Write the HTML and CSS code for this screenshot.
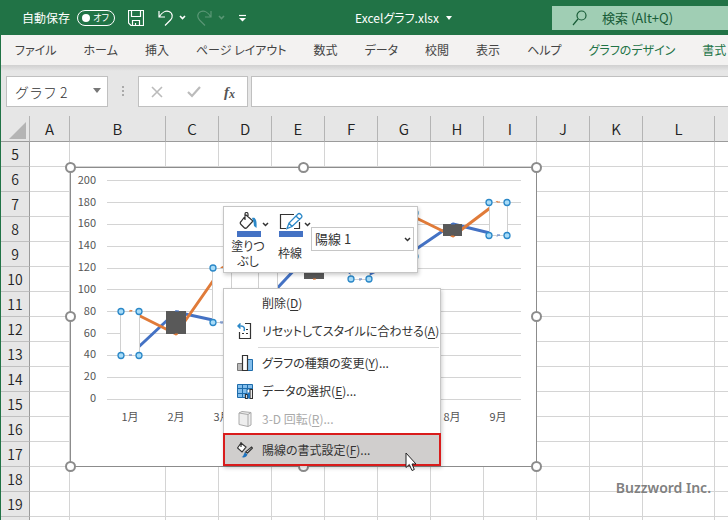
FILE: index.html
```
<!DOCTYPE html>
<html lang="ja">
<head>
<meta charset="utf-8">
<title>Excelグラフ.xlsx</title>
<link rel="stylesheet" href="styles.css">
</head>
<body>
<header class="titlebar">
  <div class="quick">
    <span class="autosave" id="autosave">自動保存</span>
    <button class="toggle" role="switch" aria-checked="false" aria-labelledby="autosave"><i class="knob"></i><span>オフ</span></button>
    <button class="icon save" aria-label="上書き保存"><svg width="16" height="16" viewBox="0 0 16 16"><path d="M.5.5h15v15H3L.5 13zM3.500.5v6h9v-6M4.500 15.500v-5h7v5M7.500 15.500v-2.500"/></svg></button>
    <button class="icon undo" aria-label="元に戻す"><svg width="28" height="18" viewBox="0 0 28 18"><path d="M1 2v6h6M1.500 7.500C4 3 8 1.500 11 2.500c4 1.500 4 6 1.500 8.500L7 16.500"/><path class="thick" d="M22 7l2.500 2.500L27 7"/></svg></button>
    <button class="icon redo" aria-label="やり直し" disabled><svg width="28" height="18" viewBox="0 0 28 18"><path d="M14 2v6H8M13.500 7.500C11 3 7 1.500 4 2.500c-4 1.500-4 6-1.500 8.500L8 16.500"/><path class="thick" d="M22 7l2.500 2.500L27 7"/></svg></button>
    <button class="icon custom" aria-label="クイック アクセスのカスタマイズ"><svg width="8" height="8" viewBox="0 0 8 8"><path d="M0 1.500h7"/><path class="fill" d="M0 4h7L3.500 7.500z"/></svg></button>
  </div>
  <button class="doc">Excelグラフ.xlsx<svg width="6" height="4" viewBox="0 0 6 4"><path d="M0 0h6L3 4z"/></svg></button>
  <label class="search">
    <svg width="16" height="16" viewBox="0 0 16 16"><circle cx="9.500" cy="5.500" r="4.500"/><path d="M6 9L1 15"/></svg>
    <input type="text" placeholder="検索 (Alt+Q)" aria-label="検索">
  </label>
</header>
<nav class="tabs">
  <button>ファイル</button><button>ホーム</button><button>挿入</button><button>ページ レイアウト</button><button>数式</button><button>データ</button><button>校閲</button><button>表示</button><button>ヘルプ</button><button class="ctx">グラフのデザイン</button><button class="ctx">書式</button>
</nav>
<main>
  <div class="formula">
    <div class="namebox"><input type="text" value="グラフ 2" aria-label="名前ボックス"><svg width="8" height="5" viewBox="0 0 8 5"><path d="M0 0h8L4 5z"/></svg></div>
    <i class="grip"></i>
    <div class="fxtools">
      <button aria-label="キャンセル"><svg width="12" height="12" viewBox="0 0 12 12"><path d="M1 1l10 10M11 1L1 11"/></svg></button>
      <button aria-label="入力"><svg width="14" height="12" viewBox="0 0 14 12"><path class="check" d="M1 6l4 4 8-9"/></svg></button>
      <button class="fx" aria-label="関数の挿入">f<sub>x</sub></button>
    </div>
    <input class="fbar" type="text" aria-label="数式バー">
  </div>
  <section class="sheet">
    <table>
      <colgroup><col class="c-head"><col class="c-a"><col class="c-b"><col class="c"><col class="c"><col class="c"><col class="c"><col class="c"><col class="c"><col class="c"><col class="c"><col class="c"><col class="c-l"><col></colgroup>
      <thead><tr><td class="corner"><svg width="18" height="18" viewBox="0 0 18 18"><path d="M17 0v17H0z"/></svg></td><th>A</th><th>B</th><th>C</th><th>D</th><th>E</th><th>F</th><th>G</th><th>H</th><th>I</th><th>J</th><th>K</th><th>L</th><th></th></tr></thead>
      <tbody id="rows"></tbody>
    </table>
    <svg class="chart" width="488" height="320" viewBox="60 157 488 320" role="img" aria-label="グラフ 2">
      <rect class="area" x="70.500" y="167.500" width="466" height="299"/>
      <g class="grid"><path d="M107 180.500H521M107 202.500H521M107 224.500H521M107 246.500H521M107 268.500H521M107 289.500H521M107 311.500H521M107 333.500H521M107 355.500H521M107 377.500H521M107 399.500H521"/></g>
      <g class="values"><text x="96" y="184">200</text><text x="96" y="206">180</text><text x="96" y="227">160</text><text x="96" y="249">140</text><text x="96" y="271">120</text><text x="96" y="293">100</text><text x="96" y="315">80</text><text x="96" y="337">60</text><text x="96" y="358">40</text><text x="96" y="380">20</text><text x="96" y="402">0</text></g>
      <g class="months"><text x="130" y="421">1月</text><text x="176" y="421">2月</text><text x="222" y="421">3月</text><text x="452" y="421">8月</text><text x="498" y="421">9月</text></g>
      <path class="line blue" d="M130 355l46-43 46 10 46-24 46-49 46 30 46-23 47-32 45 11"/>
      <path class="line orange" d="M130 311l46 23 46-66 46-21 46 31 46-34 46-31 47 23 45-34"/>
      <g class="up"><rect x="120.500" y="311.500" width="19" height="44"/><rect x="212.500" y="268.500" width="19" height="54"/><rect x="258.500" y="246.500" width="19" height="54"/><rect x="350.500" y="244.500" width="19" height="35"/><rect x="396.500" y="213.500" width="19" height="43"/><rect x="489.500" y="202.500" width="18" height="33"/></g>
      <g class="down"><rect x="166" y="311" width="20" height="23"/><rect x="304" y="249" width="20" height="30"/><rect x="443" y="224" width="19" height="12"/></g>
      <path class="tick orange" d="M129 311h3M497 202h3M230 268h-6M175 334h3M313 279h3M451 236h3"/>
      <path class="tick blue" d="M129 355h3M497 235h3M359 279h3M220 322h5M175 311h4M451 224h4"/>
      <g class="dots"><circle cx="121" cy="311.500" r="3"/><circle cx="139" cy="311.500" r="3"/><circle cx="121" cy="355.500" r="3"/><circle cx="139" cy="355.500" r="3"/><circle cx="213" cy="268" r="3"/><circle cx="213" cy="322.500" r="3"/><circle cx="351" cy="279" r="3"/><circle cx="369" cy="279" r="3"/><circle cx="415" cy="213" r="3"/><circle cx="415" cy="256.500" r="3"/><circle cx="489" cy="202.500" r="3"/><circle cx="507" cy="202.500" r="3"/><circle cx="489" cy="235.500" r="3"/><circle cx="507" cy="235.500" r="3"/></g>
      <g class="handles"><circle cx="70.500" cy="167.500" r="4.500"/><circle cx="303.500" cy="167.500" r="4.500"/><circle cx="536.500" cy="167.500" r="4.500"/><circle cx="70.500" cy="316.500" r="4.500"/><circle cx="536.500" cy="316.500" r="4.500"/><circle cx="70.500" cy="466.500" r="4.500"/><circle cx="303.500" cy="466.500" r="4.500"/><circle cx="536.500" cy="466.500" r="4.500"/></g>
    </svg>
    <div class="mini popup">
      <button class="tool"><svg width="34" height="26" viewBox="0 0 34 26"><path class="ink" d="M10 3l7 6-6 6.500c-1 1-2 1-3 0L5 12.500c-1-1-1-2 0-3L10 3zM9 8V2c0-2 3-2 3 0v3"/><path class="paint" d="M16 6c4-1 5 2 4.500 10L18 14l-.5-4z"/><path class="ink arrow" d="M27 11l2.500 2.500L32 11"/><path class="swatch" d="M1 19h24v6H1z"/></svg><span>塗りつ<br>ぶし</span></button>
      <button class="tool"><svg width="34" height="26" viewBox="0 0 34 26"><path class="ink" d="M16 2.500H2.500v14H8M21.500 10v6.500H16"/><path class="pencil" d="M9 16.500l2-5.500L20 2c1.500-1.500 5 1.500 3.500 3.500L14 14.500zM18 4l3.500 3.500M11 11l3 3.500"/><path class="ink arrow" d="M27 11l2.500 2.500L32 11"/><path class="swatch" d="M1 19h24v6H1z"/></svg><span>枠線</span></button>
      <div class="element"><select aria-label="グラフ要素"><option>陽線 1</option></select><svg width="7" height="5" viewBox="0 0 7 5"><path class="ink arrow" d="M1 1l2.500 2.500L6 1"/></svg></div>
    </div>
    <div class="menu popup" role="menu">
      <button role="menuitem"><i></i><span>削除(<u>D</u>)</span></button>
      <button role="menuitem"><svg width="16" height="16" viewBox="0 0 16 16"><path class="ink" d="M8 .5h5.500v15h-11V9"/><path class="blue" d="M3.500.5L1 3l2.500 2.500M1 3h3c3 0 4 2 3 5"/><path class="ink dash" d="M9 6.500h3M5 10.500h2M9 10.500h3"/></svg><span>リセットしてスタイルに合わせる(<u>A</u>)</span></button>
      <hr>
      <button role="menuitem"><svg width="16" height="16" viewBox="0 0 16 16"><path class="greyfill" d="M.5 8.500h5v7h-5z"/><path class="bluefill" d="M10.500 4.500h5v11h-5z"/><path class="ink whitefill" d="M5.500.5h5v15h-5z"/></svg><span>グラフの種類の変更(<u>Y</u>)...</span></button>
      <button role="menuitem"><svg width="16" height="16" viewBox="0 0 16 16"><path class="bluefill" d="M.5 1.500h15V6H10v8.500H.5z"/><path class="table" d="M5.500 1.500v13M10.500 1.500V7M.5 5.500h15M.5 10.500H10"/><path class="ink whitefill" d="M8.500 11.500h2v4h-2zM13 6.500h2.500v9H13z"/><path class="deep" d="M10.500 9.500H13v6h-2.500z"/></svg><span>データの選択(<u>E</u>)...</span></button>
      <button role="menuitem" disabled><svg width="16" height="16" viewBox="0 0 16 16"><path class="cube" d="M2 2l3-1.500 9 1V14l-3 1.500-9-2zM2 2l9 1.500v12M11 3.500l3-2"/></svg><span>3-D 回転(<u>R</u>)...</span></button>
      <button class="active" role="menuitem"><svg width="16" height="16" viewBox="0 0 16 16"><path class="ink whitefill" d="M4 1l5 4-4 5-4.500-4zM4 5V0"/><path class="ink whitefill" d="M15.500 6l-5 5-2-1 6-5z"/><path class="deep" d="M8 10.500l2.500 2c-1 3-4 3.500-6 2.500 2 0 2-3 3.500-4.500z"/></svg><span>陽線の書式設定(<u>F</u>)...</span></button>
    </div>
    <svg class="cursor" width="12" height="20" viewBox="0 0 12 20"><path d="M1 1v14.500l3.300-3L7 18.500l2.300-1L7 12h4z"/></svg>
    <span class="credit">Buzzword Inc.</span>
  </section>
</main>
<script src="rows.js"></script>
</body>
</html>
```
FILE: rows.js
```
const body = document.getElementById('rows');
const last = 19;
// One extra, unnumbered row runs under the bottom edge of the window.
for (let n = 5; n <= last + 1; n++) {
  const row = body.insertRow();
  const head = document.createElement('th');
  if (n <= last) head.textContent = n;
  row.append(head);
  for (let c = 0; c < 13; c++) row.insertCell();
}
```
FILE: styles.css
```
* { box-sizing: border-box; }
body {
  margin: 0;
  height: 100vh;
  overflow: hidden;
  display: flex;
  flex-direction: column;
  background: #e6e6e6;
  font: 12px/20px "Noto Sans CJK JP", sans-serif;
  font-feature-settings: "palt";
  color: #333;
}
button, input, select { font: inherit; font-feature-settings: inherit; color: inherit; border: 0; padding: 0; margin: 0; background: none; }
button { white-space: nowrap; }
svg { display: block; flex: none; fill: none; }

.titlebar { display: flex; align-items: center; flex: none; height: 35px; background: #217346; color: #fff; }
.quick { display: flex; align-items: center; padding-left: 22px; }
.toggle { display: flex; align-items: center; justify-content: space-between; width: 38px; height: 16px; margin: 0 13px 0 7px; padding: 0 5px 0 4px; border: 1px solid #fff; border-radius: 8px; font-size: 9px; line-height: 14px; }
.knob { width: 8px; height: 8px; border-radius: 50%; background: #fff; }
.icon svg { stroke: #fff; stroke-width: 1.2; }
.icon .thick { stroke-width: 1.6; }
.icon .fill { fill: #fff; stroke: none; }
.undo { margin-left: 14px; }
.redo { margin-left: 11px; opacity: .25; }
.custom { margin-left: 14px; }
.doc { flex: 1; display: flex; align-items: center; justify-content: center; gap: 7px; padding-left: 8px; }
.doc svg { fill: #fff; }
.search { display: flex; align-items: center; gap: 14px; width: 176px; height: 24px; padding-left: 20px; background: #a0ceb4; color: #185c37; font-size: 13px; }
.search svg { stroke: #185c37; stroke-width: 1.2; }
.search input { width: 100px; min-width: 0; flex: 1; }
.search input::placeholder { color: #185c37; opacity: 1; }

.tabs { display: flex; gap: 27px; flex: none; height: 30px; padding-left: 14px; background: #f3f2f1; border-left: 1px solid #217346; overflow: hidden; color: #444; }
.tabs .ctx { color: #217346; }

main { flex: 1; min-height: 0; border-left: 1px solid #217346; background: linear-gradient(#d0d0d0, #e6e6e6 6px); display: flex; flex-direction: column; }
.formula { display: flex; flex: none; padding: 11px 0 9px 5px; height: 51px; }
.namebox { display: flex; align-items: center; width: 102px; background: #fff; border: 1px solid #c0c0c0; padding: 0 6px 0 8px; font-size: 14px; font-weight: 300; font-feature-settings: normal; }
.namebox input { flex: 1; min-width: 0; }
.namebox svg { fill: #777; margin-bottom: 2px; }
.grip { width: 2px; height: 11px; margin: 10px 14px; background: repeating-linear-gradient(#aaa 0 2px, transparent 2px 4px); }
.fxtools { display: flex; align-items: center; justify-content: space-between; width: 110px; padding: 0 12px; background: #fff; border: 1px solid #c0c0c0; }
.fxtools svg { stroke: #bbb; stroke-width: 1.6; }
.fxtools .check { stroke-width: 2.2; }
.fx { font: italic bold 15px/20px "Liberation Serif", serif; color: #555; }
.fx sub { font-size: 12px; line-height: 1px; vertical-align: -1px; }
.fbar { flex: 1; min-width: 0; margin-left: 3px; background: #fff; border: 1px solid #c0c0c0; border-right: 0; }

.sheet { position: relative; flex: 1; min-height: 0; overflow: hidden; }
table { width: 100%; min-width: 780px; table-layout: fixed; border-spacing: 0; background: #fff; }
.c-head { width: 29px; }
.c-a { width: 40px; }
.c-b { width: 96px; }
.c { width: 53px; }
.c-l { width: 72px; }
th, td { padding: 0; height: 25px; border: solid #d4d4d4; border-width: 0 1px 1px 0; }
th { font-size: 14px; line-height: 24px; font-weight: 350; color: #222; background: #e6e6e6; }
thead th, .corner { height: 26px; background: #e6e6e6; border-bottom-color: #9b9b9b; border-right-color: #b4b4b4; }
thead th { font-size: 15px; line-height: 25px; }
tbody th { border-right-color: #9b9b9b; border-bottom-color: #c0c0c0; }
.corner svg { fill: #b4b4b4; margin: 4px 0 0 8px; }

/* The chart and its menus float over the cells. */
.chart { position: absolute; left: 59px; top: 41px; }
.area { fill: #fff; stroke: #8c8c8c; }
.grid { stroke: #d4d4d4; }
.values, .months { font-size: 11px; fill: #555; }
.values { text-anchor: end; }
.months { text-anchor: middle; }
.line { stroke-width: 3; stroke-linejoin: round; }
.tick { stroke-width: 1; }
.chart .blue { stroke: #4472c4; }
.chart .orange { stroke: #e07b39; }
.up { fill: #fff; stroke: #d0d0d0; }
.down { fill: #595959; }
.dots { fill: #a8dcf8; stroke: #2b88c8; stroke-width: 1.3; }
.handles { fill: #fff; stroke: #8c8c8c; stroke-width: 2; }

.popup { position: absolute; left: 222px; background: #fff; border: 1px solid #c6c6c6; box-shadow: 1px 2px 4px #0003; }
.ink { stroke: #333; stroke-width: 1.2; }
.mini { top: 90px; width: 195px; height: 67px; display: flex; padding: 5px 3px; }
.tool { width: 42px; display: flex; flex-direction: column; align-items: center; }
.tool svg { margin-left: 10px; }
.tool span { flex: 1; display: flex; align-items: center; line-height: 15px; }
.arrow { stroke-width: 1.5; }
.paint { fill: #2b88c8; }
.swatch { fill: #4472c4; }
.pencil { stroke: #2b88c8; stroke-width: 1.3; fill: #fff; }
.element { flex: 1; display: grid; align-items: center; height: 24px; margin-top: 15px; border: 1px solid #c6c6c6; }
.element > * { grid-area: 1 / 1; }
.element select { appearance: none; width: 100%; padding-left: 3px; font-size: 13px; }
.element svg { justify-self: end; margin-right: 2px; pointer-events: none; }
.menu { top: 172px; width: 218px; }
.menu button { display: flex; align-items: center; gap: 9px; width: 100%; height: 28px; padding-left: 13px; }
.menu button > i { width: 16px; }
.menu u { text-underline-offset: 2px; }
.menu hr { height: 1px; margin: 2px 1px 1px 34px; border: 0; background: #d8d8d8; }
.menu .active { width: 218px; height: 33px; margin: 0 -1px -1px; padding-left: 12px; border: 2px solid #d91c1c; background: #d0cecd; }
.menu button:disabled { color: #aaa; }
.menu .blue { stroke: #2b88c8; stroke-width: 1.5; }
.dash { stroke-dasharray: 2 1; }
.greyfill { fill: #bbb; stroke: #777; }
.bluefill { fill: #83beec; stroke: #1e6cab; }
.whitefill { fill: #fff; }
.deep { fill: #1e73be; }
.table { stroke: #1e6cab; }
.cube { stroke: #aaa; fill: #eee; }
.cursor { position: absolute; left: 404px; top: 336px; fill: #fff; stroke: #222; }
.credit { position: absolute; right: 17px; bottom: 22px; font: 600 14px/20px "Noto Sans", sans-serif; color: #808080; }
```
